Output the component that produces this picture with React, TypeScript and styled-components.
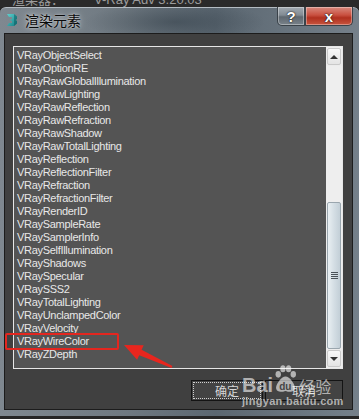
import styled, { createGlobalStyle } from 'styled-components';

const GlobalStyle = createGlobalStyle`
  * { box-sizing: border-box; }
  html, body { margin: 0; padding: 0; background: #262626; }
`;

const items = [
  'VRayObjectSelect',
  'VRayOptionRE',
  'VRayRawGlobalIllumination',
  'VRayRawLighting',
  'VRayRawReflection',
  'VRayRawRefraction',
  'VRayRawShadow',
  'VRayRawTotalLighting',
  'VRayReflection',
  'VRayReflectionFilter',
  'VRayRefraction',
  'VRayRefractionFilter',
  'VRayRenderID',
  'VRaySampleRate',
  'VRaySamplerInfo',
  'VRaySelfIllumination',
  'VRayShadows',
  'VRaySpecular',
  'VRaySSS2',
  'VRayTotalLighting',
  'VRayUnclampedColor',
  'VRayVelocity',
  'VRayWireColor',
  'VRayZDepth',
];

const Page = styled.div`
  position: relative;
  width: 359px;
  height: 419px;
  overflow: hidden;
  background: #262626;
  display: flex;
  flex-direction: column;
`;

const TopStrip = styled.div`
  height: 7px;
  flex-shrink: 0;
  display: flex;
  align-items: flex-end;
  overflow: hidden;
  padding-left: 12px;
  background: #2a2a2a;
`;

const StripText = styled.span<{ $left: number }>`
  flex-shrink: 0;
  margin-left: ${(p) => p.$left}px;
  margin-bottom: 1px;
  font: 13px/13px 'Liberation Sans', 'Noto Sans CJK SC', sans-serif;
  color: #9c9c9c;
  white-space: nowrap;
`;

const Window = styled.div`
  height: 409px;
  flex-shrink: 0;
  display: flex;
  flex-direction: column;
  padding: 0 6px 6px 4px;
  border-top: 1px solid #b4bcc3;
  border-radius: 6px 6px 0 0;
  background:
    radial-gradient(ellipse 90px 20px at 175px 14px, rgba(40, 52, 62, 0.45), transparent),
    linear-gradient(90deg, #7f8890 0%, #6f7981 35%, #5b6771 60%, #75808a 100%);
`;

const TitleBar = styled.div`
  height: 25px;
  display: flex;
  align-items: flex-start;
  padding-left: 1px;
`;

const TitleLeft = styled.div`
  display: flex;
  align-items: center;
  gap: 6px;
  padding-top: 5px;
  flex: 1;
`;

const Title = styled.span`
  font: 14px/14px 'Noto Sans CJK SC', sans-serif;
  color: #0a0a0a;
  text-shadow: 0 0 6px rgba(255, 255, 255, 0.7), 0 0 2px rgba(255, 255, 255, 0.6);
`;

const CaptionButton = styled.div<{ $close?: boolean }>`
  width: ${(p) => (p.$close ? 48 : 28)}px;
  height: 19px;
  margin-top: -1px;
  display: flex;
  align-items: center;
  justify-content: center;
  border: 1px solid #3a4249;
  border-top: none;
  border-radius: ${(p) => (p.$close ? '0 0 5px 0' : '0 0 0 5px')};
  background: ${(p) =>
    p.$close
      ? 'linear-gradient(180deg, #d98a7e 0%, #c95040 45%, #b0301f 60%, #c8553f 100%)'
      : 'linear-gradient(180deg, #a3abb2 0%, #828b93 45%, #5f6870 55%, #79828a 100%)'};
  box-shadow: inset 0 0 0 1px rgba(255, 255, 255, 0.35);
  font: bold 15px/15px 'Liberation Sans', sans-serif;
  color: #ffffff;
  text-shadow: 0 0 2px #222, 0 0 1px #000;
`;

const Client = styled.div`
  flex: 1;
  display: flex;
  flex-direction: column;
  padding: 12px 9px 0 8px;
  background: #404040;
  border: 1px solid #1c1c1c;
`;

const ListBox = styled.div`
  height: 323px;
  display: flex;
  background: #545454;
  border: 1px solid #e6e6e6;
`;

const Items = styled.div`
  flex: 1;
  padding: 2px 0 0 3px;
  overflow: hidden;
`;

const Item = styled.div`
  height: 13px;
  font: 11px/13px 'Liberation Sans', sans-serif;
  letter-spacing: -0.3px;
  color: #e8e8e8;
  white-space: nowrap;
`;

const ScrollBar = styled.div`
  width: 16px;
  display: flex;
  flex-direction: column;
  background: #ececec;
`;

const ScrollButton = styled.div`
  height: 17px;
  display: flex;
  align-items: center;
  justify-content: center;
  margin: 1px;
  background: linear-gradient(180deg, #f7f7f7, #e4e4e4);
  border: 1px solid #c9c9c9;
  border-radius: 2px;
`;

const Arrow = styled.div<{ $down?: boolean }>`
  width: 0;
  height: 0;
  border-left: 4px solid transparent;
  border-right: 4px solid transparent;
  ${(p) => (p.$down ? 'border-top: 4px solid #333;' : 'border-bottom: 4px solid #333;')}
`;

const Track = styled.div`
  flex: 1;
  display: flex;
  flex-direction: column;
  background: #eeeeee;
`;

const Thumb = styled.div`
  margin-top: 136px;
  height: 147px;
  display: flex;
  flex-direction: column;
  align-items: center;
  justify-content: center;
  gap: 1px;
  margin-left: 1px;
  margin-right: 1px;
  border: 1px solid #9aa6ae;
  border-radius: 2px;
  background: linear-gradient(90deg, #e9eff2, #d4dee4 50%, #c3cfd7);
`;

const Grip = styled.div`
  width: 7px;
  height: 1px;
  background: #4a5258;
`;

const ButtonRow = styled.div`
  margin-top: 11px;
  display: flex;
  justify-content: flex-end;
  gap: 2px;
`;

const DialogButton = styled.div<{ $w: number; $focus?: boolean }>`
  width: ${(p) => p.$w}px;
  height: 21px;
  display: flex;
  align-items: center;
  justify-content: center;
  background: #434343;
  border: 1px solid #141414;
  font: 12px/12px 'Noto Sans CJK SC', sans-serif;
  color: #d6d6d6;
  ${(p) => (p.$focus ? 'outline: 1px dotted #d0d0d0; outline-offset: -3px;' : '')}
`;

const Highlight = styled.div`
  position: absolute;
  left: 5px;
  top: 333px;
  width: 114px;
  height: 17px;
  border: 2px solid #e3261f;
  border-radius: 2px;
`;

const Pointer = styled.svg`
  position: absolute;
  left: 118px;
  top: 334px;
`;

const Watermark = styled.div`
  position: absolute;
  left: 242px;
  top: 364px;
  display: flex;
  flex-direction: column;
  color: rgba(255, 255, 255, 0.6);
`;

const MarkTop = styled.div`
  display: flex;
  align-items: flex-end;
  height: 29px;
`;

const Bai = styled.span`
  font: bold 20px/20px 'Liberation Sans', sans-serif;
  margin-bottom: -2px;
`;

const Paw = styled.div`
  position: relative;
  width: 25px;
  height: 29px;
`;

const PawText = styled.span`
  position: absolute;
  left: 6px;
  bottom: 0;
  font: bold 10px/12px 'Liberation Sans', sans-serif;
  color: #454545;
`;

const Jingyan = styled.span`
  font: 16px/16px 'Noto Sans CJK SC', sans-serif;
  margin-left: 1px;
  margin-bottom: -1px;
`;

const MarkUrl = styled.span`
  margin-top: 3px;
  font: bold 11px/11px 'Liberation Sans', sans-serif;
  letter-spacing: 0.3px;
`;

const MaxIcon = () => (
  <svg width="14" height="14" viewBox="0 0 14 14">
    <defs>
      <linearGradient id="mx" x1="0" y1="0" x2="1" y2="1">
        <stop offset="0" stopColor="#5fd3d0" />
        <stop offset="1" stopColor="#127c82" />
      </linearGradient>
    </defs>
    <path d="M2 1 L9 1 L12 3.5 L12 6 L10.5 7 L12 8 L12 10.5 L9 13 L2 13 L4 10 L7 10 L7 8 L4.5 7 L7 6 L7 4 L4 4 Z" fill="url(#mx)" />
    <path d="M9 1 L12 3.5 L12 6 L10.5 7 L12 8 L12 10.5 L9 13 L9 1 Z" fill="#0d5d63" opacity="0.55" />
  </svg>
);

const App = () => {
  return (
    <Page>
      <GlobalStyle />
      <TopStrip>
        <StripText $left={0}>渲染器：</StripText>
        <StripText $left={30}>V-Ray Adv 3.20.03</StripText>
      </TopStrip>
      <Window>
        <TitleBar>
          <TitleLeft>
            <MaxIcon />
            <Title>渲染元素</Title>
          </TitleLeft>
          <CaptionButton>?</CaptionButton>
          <CaptionButton $close>x</CaptionButton>
        </TitleBar>
        <Client>
          <ListBox>
            <Items>
              {items.map((name) => (
                <Item key={name}>{name}</Item>
              ))}
            </Items>
            <ScrollBar>
              <ScrollButton>
                <Arrow />
              </ScrollButton>
              <Track>
                <Thumb>
                  <Grip />
                  <Grip />
                  <Grip />
                  <Grip />
                </Thumb>
              </Track>
              <ScrollButton>
                <Arrow $down />
              </ScrollButton>
            </ScrollBar>
          </ListBox>
          <ButtonRow>
            <DialogButton $w={72} $focus>确定</DialogButton>
            <DialogButton $w={78}>取消</DialogButton>
          </ButtonRow>
        </Client>
      </Window>

      <Highlight />
      <Pointer width="60" height="40" viewBox="0 0 60 40">
        <polygon
          points="6,11 25.7,11.2 23.6,15.8 54.4,32.1 53.6,33.9 21.2,21.2 19.1,25.8"
          fill="#e8261e"
        />
      </Pointer>

      <Watermark>
        <MarkTop>
          <Bai>Bai</Bai>
          <Paw>
            <svg width="25" height="29" viewBox="0 0 24 28">
              <g fill="rgba(255,255,255,0.6)">
                <ellipse cx="5" cy="10" rx="2.6" ry="3.2" />
                <ellipse cx="9.5" cy="4.5" rx="2.6" ry="3.4" />
                <ellipse cx="15" cy="4.5" rx="2.6" ry="3.4" />
                <ellipse cx="19.5" cy="10" rx="2.6" ry="3.2" />
                <path d="M12 12 C16 12 22 20 21 24 C20 28 15 27 12 26 C9 27 4 28 3 24 C2 20 8 12 12 12 Z" />
              </g>
            </svg>
            <PawText>du</PawText>
          </Paw>
          <Jingyan>经验</Jingyan>
        </MarkTop>
        <MarkUrl>jingyan.baidu.com</MarkUrl>
      </Watermark>
    </Page>
  );
};

export default App;
